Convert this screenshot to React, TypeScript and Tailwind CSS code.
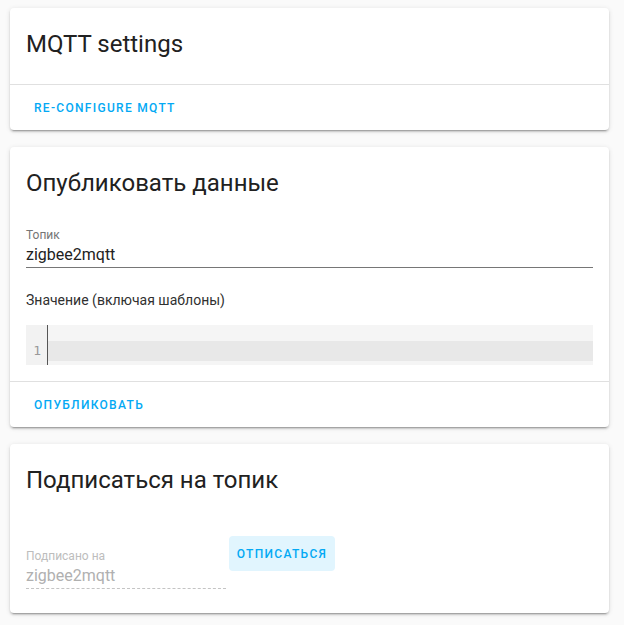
import React from "react";

const font = { fontFamily: "Roboto, 'Noto Sans', sans-serif" };

const Card: React.FC<{ children: React.ReactNode }> = ({ children }) => (
  <div className="bg-white rounded-[4px] shadow-[0_2px_2px_0_rgba(0,0,0,0.14),0_1px_5px_0_rgba(0,0,0,0.12),0_3px_1px_-2px_rgba(0,0,0,0.2)]">
    {children}
  </div>
);

const CardHeader: React.FC<{ title: string }> = ({ title }) => (
  <div className="px-4 pt-4 pb-4 text-[24px] leading-10 text-[#212121]">{title}</div>
);

const Actions: React.FC<{ label: string }> = ({ label }) => (
  <div className="border-t border-[#e0e0e0] h-[46px] flex items-center px-4">
    <button className="px-2 text-[12px] font-medium uppercase tracking-[1.3px] text-[#03a9f4]">
      {label}
    </button>
  </div>
);

const CodeEditor: React.FC = () => (
  <div className="mt-[15px] h-10 flex bg-[#f5f5f5]">
    <div className="w-[22px] bg-[#f2f2f2] border-r border-[#555] flex flex-col">
      <div className="h-4" />
      <div className="h-5 flex items-center justify-end pr-[6px] text-[13px] text-[#999]" style={{ fontFamily: "'DejaVu Sans Mono', monospace" }}>
        1
      </div>
    </div>
    <div className="flex-1 flex flex-col">
      <div className="h-4" />
      <div className="h-5 bg-[#e8e8e8]" />
    </div>
  </div>
);

export default function App() {
  return (
    <div className="min-h-[625px] bg-[#fafafa] pt-2 pl-[10px] pr-[15px] flex flex-col gap-[17px]" style={font}>
      <Card>
        <div className="px-4 pt-4 pb-5 text-[24px] leading-10 text-[#212121]">MQTT settings</div>
        <Actions label="Re-configure MQTT" />
      </Card>

      <Card>
        <CardHeader title="Опубликовать данные" />
        <div className="px-4 pb-4">
          <div className="pt-2 border-b border-[#767676]">
            <div className="text-[12px] leading-4 text-[#757575]">Топик</div>
            <div className="text-[16px] leading-6 text-[#212121]">zigbee2mqtt</div>
          </div>
          <div className="mt-[22px] text-[14px] leading-5 text-[#303030]">Значение (включая шаблоны)</div>
          <CodeEditor />
        </div>
        <Actions label="Опубликовать" />
      </Card>

      <Card>
        <CardHeader title="Подписаться на топик" />
        <div className="px-4 pt-5 pb-6 flex items-start">
          <div className="w-[200px] pt-[12px] border-b border-dashed border-[#c4c4c4]">
            <div className="text-[12px] leading-4 text-[#bdbdbd]">Подписано на</div>
            <div className="text-[16px] leading-6 text-[#b0b0b0]">zigbee2mqtt</div>
          </div>
          <button className="ml-[3px] h-[35px] w-[106px] flex items-center justify-center rounded-[4px] bg-[#e1f5fe] text-[12px] font-medium uppercase tracking-[1.3px] text-[#03a9f4]">
            Отписаться
          </button>
        </div>
      </Card>
    </div>
  );
}
